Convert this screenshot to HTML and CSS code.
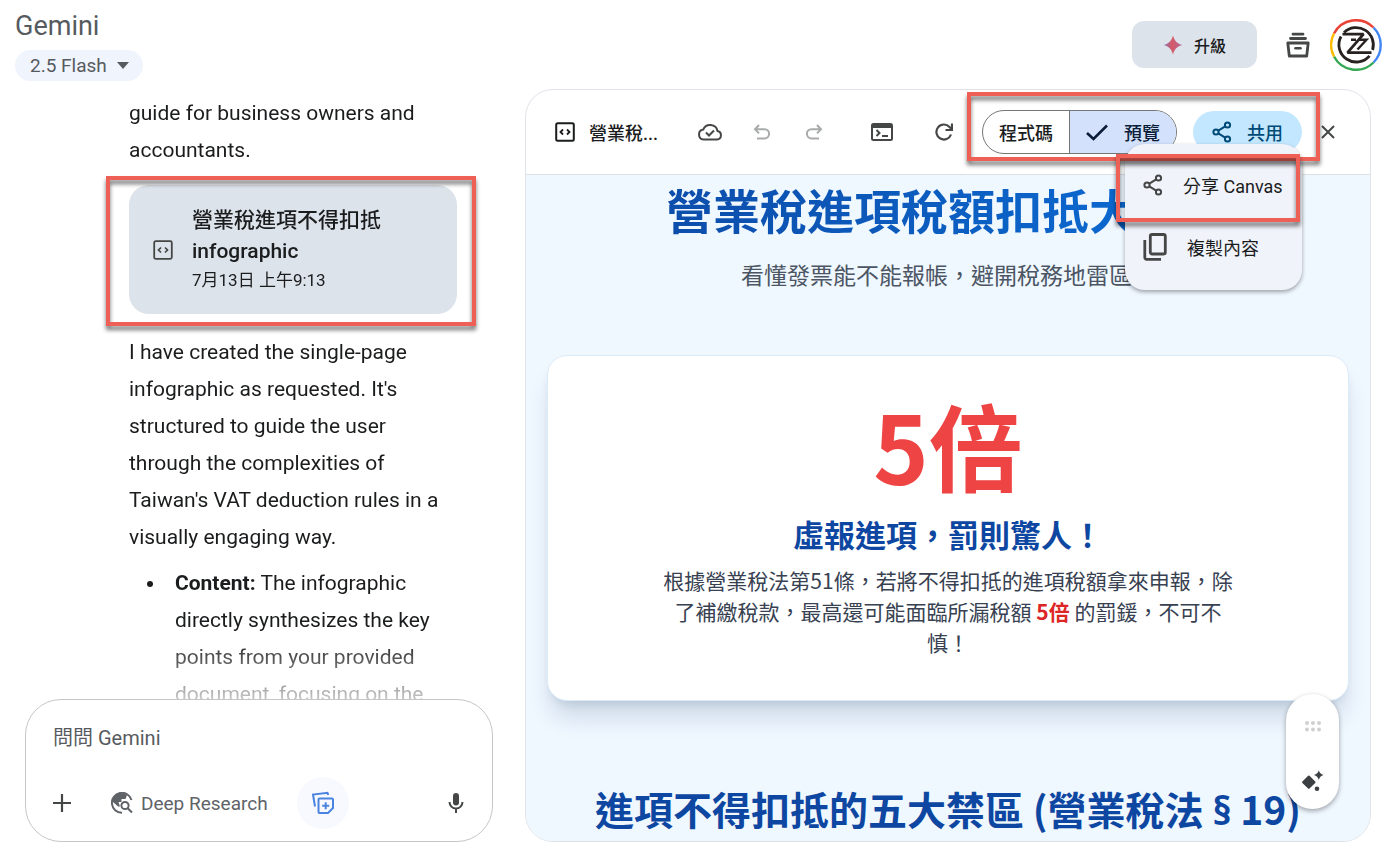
FILE: index.html
```html
<!DOCTYPE html>
<html lang="zh-Hant">
<head>
    <meta charset="UTF-8">
    <meta name="viewport" content="width=device-width, initial-scale=1.0">
    <title>Gemini</title>
    <link rel="stylesheet" href="styles.css">
</head>
<body>
    <header class="topbar">
        <div class="brand">
            <h1>Gemini</h1>
            <button class="model" type="button">2.5 Flash
                <svg width="12" height="7" viewBox="0 0 12 7"><path d="M0 0h12L6 7z" fill="currentColor"/></svg>
            </button>
        </div>
        <div class="account">
            <button class="upgrade" type="button">
                <svg width="20" height="20" viewBox="0 0 20 20">
                    <defs>
                        <linearGradient id="spark" x1="0" y1="0" x2="1" y2="0">
                            <stop offset="0" stop-color="#8a6fb0"/>
                            <stop offset=".45" stop-color="#d65a68"/>
                            <stop offset="1" stop-color="#b0689a"/>
                        </linearGradient>
                    </defs>
                    <path d="M10 .5C11.500 6 14 8.500 19.500 10C14 11.500 11.500 14 10 19.500C8.500 14 6 11.500 .5 10C6 8.500 8.500 6 10 .5z" fill="url(#spark)"/>
                </svg>
                升級
            </button>
            <button class="icon-btn stack" type="button" aria-label="封存">
                <svg width="24" height="26" viewBox="0 0 24 26" fill="none" stroke="#444746">
                    <path d="M7 2.200h10M4.500 6.500h15" stroke-width="2.800" stroke-linecap="round"/>
                    <path d="M1.800 11h20.400l-1.500 13H3.300z" stroke-width="2.800" stroke-linejoin="round"/>
                    <path d="M9.500 16.300h5" stroke-width="2.600" stroke-linecap="round"/>
                </svg>
            </button>
            <a class="avatar" href="#" aria-label="帳戶">
                <svg width="52" height="52" viewBox="0 0 52 52" fill="none">
                    <g stroke-width="2.400">
                        <path d="M4 14.500A24.800 24.800 0 0 1 43.500 8.500" stroke="#ea4335"/>
                        <path d="M43.500 8.500A24.800 24.800 0 0 1 43.500 43.500" stroke="#4285f4"/>
                        <path d="M43.500 43.500A24.800 24.800 0 0 1 4 37.500" stroke="#34a853"/>
                        <path d="M4 37.500A24.800 24.800 0 0 1 4 14.500" stroke="#fbbc04"/>
                    </g>
                    <g stroke="#27211f" stroke-width="2.800">
                        <path d="M14 13.500A17.300 17.300 0 0 1 42.600 31M39.500 36.800A17.300 17.300 0 0 1 11 17.500"/>
                        <path d="M12.500 15.200H33.500L17.500 33.600H41.500" stroke-linejoin="bevel"/>
                        <path d="M21 20.800h5M29 20.800h7.500L27.500 30.500" stroke-width="2.400"/>
                    </g>
                </svg>
            </a>
        </div>
    </header>

    <main class="workspace">
        <section class="chat">
            <div class="messages">
                <p>guide for business owners and accountants.</p>
                <div class="artifact-wrap">
                    <button class="artifact" type="button">
                        <svg width="20" height="20" viewBox="0 0 20 20" fill="none" stroke="#444746">
                            <rect x="1.200" y="1.200" width="17.600" height="17.600" rx="1.500" stroke-width="1.800"/>
                            <path d="M8 7.500L5.500 10L8 12.500M12 7.500L14.500 10L12 12.500" stroke-width="1.700"/>
                        </svg>
                        <span class="artifact-text">
                            <strong>營業稅進項不得扣抵 infographic</strong>
                            <span class="date">7月13日 上午9:13</span>
                        </span>
                    </button>
                    <div class="highlight highlight-artifact"></div>
                </div>
                <p>I have created the single-page infographic as requested. It's structured to guide the user through the complexities of Taiwan's VAT deduction rules in a visually engaging way.</p>
                <ul>
                    <li><b>Content:</b> The infographic directly synthesizes the key points from your provided document, focusing on the</li>
                </ul>
            </div>
            <form class="composer">
                <input type="text" placeholder="問問 Gemini" aria-label="問問 Gemini">
                <div class="tools">
                    <button class="icon-btn" type="button" aria-label="新增檔案">
                        <svg width="20" height="20" viewBox="0 0 20 20" stroke="#444746" stroke-width="2.200"><path d="M10 1v18M1 10h18"/></svg>
                    </button>
                    <button class="research" type="button">
                        <svg width="22" height="22" viewBox="0 0 22 22" fill="none" stroke="#5f6368" stroke-width="2">
                            <path d="M20.500 8A10 10 0 1 0 11 20.800"/>
                            <path d="M2 7C4 2 11 0 16 3l-1.500 4h-4v3H7.500L9 14.500H7L2 10z" fill="#5f6368" stroke="none"/>
                            <circle cx="14" cy="13.500" r="3.600"/>
                            <path d="M16.700 16.200L21 20.500"/>
                        </svg>
                        Deep Research
                    </button>
                    <button class="icon-btn canvas-toggle" type="button" aria-label="Canvas">
                        <svg width="24" height="24" viewBox="0 0 24 24" fill="none" stroke="#4a84e0" stroke-width="2">
                            <path d="M4 15.500L2 3.500L16.500 1.800L17.200 4"/>
                            <path d="M8.500 7.500h12.500a1 1 0 0 1 1 1V17l-5 5H8.500a1 1 0 0 1-1-1V8.500a1 1 0 0 1 1-1z" stroke-linejoin="round"/>
                            <path d="M14.700 11.200v7M11.200 14.700h7"/>
                        </svg>
                    </button>
                    <button class="icon-btn mic" type="button" aria-label="使用麥克風">
                        <svg width="16" height="20" viewBox="0 0 16 20" fill="none" stroke="#444746" stroke-width="2">
                            <rect x="5" y="0" width="6" height="12.500" rx="3" fill="#444746" stroke="none"/>
                            <path d="M1.500 9a6.500 6.500 0 0 0 13 0M8 15.500V20"/>
                        </svg>
                    </button>
                </div>
            </form>
        </section>

        <section class="canvas">
            <div class="canvas-bar">
                <svg class="code-icon" width="20" height="20" viewBox="0 0 20 20" fill="none" stroke="#1b1c1d">
                    <rect x="1.200" y="1.200" width="17.600" height="17.600" rx="1.500" stroke-width="2"/>
                    <path d="M8 7.500L5.500 10L8 12.500M12 7.500L14.500 10L12 12.500" stroke-width="1.800"/>
                </svg>
                <h2>營業稅...</h2>
                <div class="history">
                    <button class="icon-btn" type="button" aria-label="已儲存">
                        <svg width="26" height="18" viewBox="0 0 26 18" fill="none" stroke="#444746" stroke-width="2">
                            <path d="M6.500 16.500h13.500a4.300 4.300 0 0 0 .5-8.500A7.500 7.500 0 0 0 6.200 6.600A5 5 0 0 0 6.500 16.500z"/>
                            <path d="M9 9.500L12 12.500L17 7.500"/>
                        </svg>
                    </button>
                    <button class="icon-btn" type="button" aria-label="復原" disabled>
                        <svg width="18" height="16" viewBox="0 0 18 16" fill="none" stroke="#a8aaac" stroke-width="2"><path d="M6 1L2 5.200L6 9.400M2 5.200h9.500a4.600 4.600 0 0 1 0 9.200H4"/></svg>
                    </button>
                    <button class="icon-btn" type="button" aria-label="重做" disabled>
                        <svg width="18" height="16" viewBox="0 0 18 16" fill="none" stroke="#a8aaac" stroke-width="2"><path d="M12 1L16 5.200L12 9.400M16 5.200H6.500a4.600 4.600 0 0 0 0 9.200H14"/></svg>
                    </button>
                </div>
                <button class="icon-btn" type="button" aria-label="主控台">
                    <svg width="22" height="18" viewBox="0 0 22 18" fill="none" stroke="#444746" stroke-width="2">
                        <rect x="1" y="1" width="20" height="16" rx="1.500"/>
                        <path d="M1 3h20" stroke-width="4"/>
                        <path d="M5.500 7L8.500 10L5.500 13M11 13h6"/>
                    </svg>
                </button>
                <button class="icon-btn refresh" type="button" aria-label="重新整理">
                    <svg width="18" height="18" viewBox="0 0 18 18" fill="none" stroke="#444746" stroke-width="2.200">
                        <path d="M16 11.500A7.500 7.500 0 1 1 14.500 4L16.500 6"/>
                        <path d="M17 .5v6.500h-6.500"/>
                    </svg>
                </button>
                <div class="actions">
                    <div class="switch">
                        <button type="button">程式碼</button>
                        <button class="selected" type="button">
                            <svg width="22" height="17" viewBox="0 0 22 17" fill="none" stroke="#0b1d38" stroke-width="2.600"><path d="M1 9L7.500 15L21 1.500"/></svg>
                            預覽
                        </button>
                    </div>
                    <button class="share" type="button">
                        <svg width="20" height="22" viewBox="0 0 20 22" fill="none" stroke="currentColor" stroke-width="2">
                            <circle cx="15.500" cy="4" r="2.600"/><circle cx="4" cy="11" r="2.600"/><circle cx="15.500" cy="18" r="2.600"/>
                            <path d="M6.300 9.600L13.200 5.400M6.300 12.400L13.200 16.600"/>
                        </svg>
                        共用
                    </button>
                    <div class="menu">
                        <button class="menu-share" type="button">
                            <svg width="20" height="22" viewBox="0 0 20 22" fill="none" stroke="#444746" stroke-width="2">
                                <circle cx="15.500" cy="4" r="2.600"/><circle cx="4" cy="11" r="2.600"/><circle cx="15.500" cy="18" r="2.600"/>
                                <path d="M6.300 9.600L13.200 5.400M6.300 12.400L13.200 16.600"/>
                            </svg>
                            分享 Canvas
                        </button>
                        <button type="button">
                            <svg width="24" height="28" viewBox="0 0 24 28" fill="none" stroke="#444746" stroke-width="2.800">
                                <rect x="7.300" y="1.500" width="15" height="19.500" rx="1.800"/>
                                <path d="M1.800 7v17.500a1.800 1.800 0 0 0 1.800 1.800H18"/>
                            </svg>
                            複製內容
                        </button>
                    </div>
                    <div class="highlight highlight-actions"></div>
                    <div class="highlight highlight-menu"></div>
                </div>
                <button class="icon-btn close" type="button" aria-label="關閉">
                    <svg width="14" height="14" viewBox="0 0 14 14" stroke="#444746" stroke-width="2"><path d="M1 1l12 12M13 1L1 13"/></svg>
                </button>
            </div>

            <article class="preview">
                <h2 class="title">營業稅進項稅額扣抵大解密</h2>
                <p class="subtitle">看懂發票能不能報帳，避開稅務地雷區！</p>
                <div class="card">
                    <div class="figure">5倍</div>
                    <h3>虛報進項，罰則驚人！</h3>
                    <p>根據營業稅法第51條，若將不得扣抵的進項稅額拿來申報，除了補繳稅款，最高還可能面臨所漏稅額 <b>5倍</b> 的罰鍰，不可不慎！</p>
                </div>
                <h2 class="section-title">進項不得扣抵的五大禁區 (營業稅法 <span class="latin">§</span> 19)</h2>
            </article>

            <div class="floating">
                <svg width="18" height="12" viewBox="0 0 18 12" fill="#d0d0d0">
                    <circle cx="3" cy="3" r="2"/><circle cx="9" cy="3" r="2"/><circle cx="15" cy="3" r="2"/>
                    <circle cx="3" cy="9.500" r="2"/><circle cx="9" cy="9.500" r="2"/><circle cx="15" cy="9.500" r="2"/>
                </svg>
                <button class="icon-btn" type="button" aria-label="編輯建議">
                    <svg width="22" height="22" viewBox="0 0 22 22" fill="#3c4043">
                        <path d="M7.500 5.800L13.200 11.500a1 1 0 0 1 0 1.400L7.500 18.600a1 1 0 0 1-1.400 0L.4 12.900a1 1 0 0 1 0-1.400L6.100 5.800a1 1 0 0 1 1.400 0z"/>
                        <path d="M16.800 .3Q17.700 4 21.500 5.100Q17.700 6.200 16.800 10Q15.800 6.200 12 5.100Q15.800 4 16.800 .3z"/>
                        <circle cx="15" cy="18.800" r="2.300"/>
                    </svg>
                </button>
            </div>
        </section>
    </main>
</body>
</html>
```

FILE: styles.css
```css
* {
    box-sizing: border-box;
}
body {
    margin: 0;
    height: 100vh;
    display: flex;
    flex-direction: column;
    background-color: #fff;
    color: #1b1c1d;
    font-family: Roboto, "Noto Sans CJK TC", sans-serif;
    overflow: hidden;
}
h1, h2, h3, p, ul {
    margin: 0;
}
button {
    border: none;
    padding: 0;
    background: none;
    color: inherit;
    font: inherit;
    cursor: pointer;
}
svg {
    display: block;
    flex: none;
}
.icon-btn {
    width: 36px;
    height: 36px;
    display: flex;
    align-items: center;
    justify-content: center;
    flex: none;
}

/* top bar */
.topbar {
    display: flex;
    justify-content: space-between;
    align-items: center;
    padding: 0 18px 0 15px;
    height: 89px;
    flex: none;
}
.brand h1 {
    font-size: 27px;
    line-height: 36px;
    font-weight: 400;
    color: #575b5f;
}
.model {
    display: flex;
    align-items: center;
    gap: 10px;
    margin-top: 6px;
    padding: 0 14px 0 15px;
    height: 31px;
    border-radius: 16px;
    background-color: #f0f4fc;
    color: #575b5f;
    font-size: 19px;
}
.account {
    display: flex;
    align-items: center;
}
.upgrade {
    display: flex;
    align-items: center;
    justify-content: center;
    gap: 11px;
    width: 125px;
    height: 47px;
    border-radius: 12px;
    background-color: #dde3ea;
    font-size: 16px;
    font-weight: 500;
}
.stack {
    margin: 0 14px 0 23px;
}

/* two panes */
.workspace {
    flex: 1;
    min-height: 0;
    display: grid;
    grid-template-columns: 3fr 5fr;
    padding-bottom: 12px;
}
.chat {
    display: flex;
    flex-direction: column;
    min-width: 0;
    min-height: 0;
    padding: 0 32px 0 25px;
}
.messages {
    flex: 1;
    min-height: 0;
    overflow: hidden;
    padding: 6px 36px 0 104px;
    font-size: 21px;
    line-height: 37px;
    -webkit-mask-image: linear-gradient(#000 90%, rgba(0, 0, 0, 0.25));
    mask-image: linear-gradient(#000 90%, rgba(0, 0, 0, 0.25));
}
.artifact-wrap {
    position: relative;
    margin: 16px 0 20px;
}
.artifact {
    display: flex;
    align-items: center;
    gap: 19px;
    width: 100%;
    padding: 20px 24px;
    border-radius: 20px;
    background-color: #dde3ea;
    text-align: left;
}
.artifact strong, .date {
    display: block;
    line-height: 31px;
    font-weight: 500;
}
.artifact .date {
    font-size: 17px;
    line-height: 27px;
    font-weight: 400;
}
.messages ul {
    margin-top: 9px;
    padding-left: 37px;
}
.messages li {
    padding-left: 9px;
}

.composer {
    height: 143px;
    flex: none;
    display: flex;
    flex-direction: column;
    justify-content: space-between;
    padding: 20px 18px 12px;
    border: 1px solid #c4c7c5;
    border-radius: 36px;
}
.composer input {
    border: none;
    outline: none;
    padding: 0 9px;
    height: 36px;
    width: 100%;
    font: inherit;
    font-size: 20px;
    background: none;
}
.composer input::placeholder {
    color: #575b5f;
    opacity: 1;
}
.tools {
    display: flex;
    align-items: center;
}
.research {
    display: flex;
    align-items: center;
    gap: 8px;
    margin-left: 31px;
    color: #5f6368;
    font-size: 19px;
}
.canvas-toggle {
    width: 52px;
    height: 52px;
    margin-left: 29px;
    border-radius: 50%;
    background-color: #f8f9fe;
}
.mic {
    margin-left: auto;
}

/* canvas pane */
.canvas {
    position: relative;
    display: flex;
    flex-direction: column;
    min-width: 0;
    min-height: 0;
    margin-right: 29px;
    border: 1px solid #dfe3e8;
    border-radius: 28px;
}
.canvas-bar {
    display: flex;
    align-items: center;
    height: 85px;
    flex: none;
    padding: 0 24px 0 29px;
    border-bottom: 1px solid #dde1e6;
}
.canvas-bar h2 {
    margin: 0 34px 0 14px;
    font-size: 18px;
    font-weight: 500;
}
.history {
    display: flex;
    gap: 16px;
    margin-right: 32px;
}
.refresh {
    margin-left: 26px;
}
.actions {
    position: relative;
    display: flex;
    align-items: center;
    gap: 16px;
    margin: 0 8px 0 auto;
    font-size: 18px;
    font-weight: 500;
}
.switch {
    display: flex;
    height: 44px;
    border: 1px solid #747775;
    border-radius: 22px;
    overflow: hidden;
}
.switch button {
    display: flex;
    align-items: center;
    gap: 16px;
    padding: 0 16px;
}
.switch .selected {
    border-left: 1px solid #747775;
    background-color: #d3e1fd;
    color: #0b1d38;
}
.share {
    display: flex;
    align-items: center;
    justify-content: center;
    gap: 15px;
    width: 109px;
    height: 42px;
    border-radius: 21px;
    background-color: #c2e7ff;
    color: #004a77;
}
.menu {
    position: absolute;
    top: 34px;
    right: 0;
    z-index: 2;
    width: 177px;
    padding: 17px 0 19px;
    border-radius: 20px;
    background-color: #f0f3fa;
    box-shadow: 0 2px 4px rgba(0, 0, 0, 0.35);
    font-weight: 400;
}
.menu button {
    display: flex;
    align-items: center;
    gap: 20px;
    height: 48px;
    padding-left: 18px;
    white-space: nowrap;
}
.menu .menu-share {
    margin-bottom: 14px;
}

/* red markers */
.highlight {
    position: absolute;
    z-index: 3;
    border: 4px solid #ee6055;
    filter: drop-shadow(0 4px 2px rgba(0, 0, 0, 0.55));
    pointer-events: none;
}
.highlight-artifact {
    inset: -9px -19px -12px -23px;
}
.highlight-actions {
    inset: -18px -18px -7px -15px;
}
.highlight-menu {
    top: 44px;
    right: 2px;
    width: 184px;
    height: 68px;
}

/* infographic */
.preview {
    flex: 1;
    min-height: 0;
    overflow: hidden;
    padding: 4px 21px 0;
    border-radius: 0 0 27px 27px;
    background-color: #eff7ff;
    font-family: "Noto Sans CJK TC", sans-serif;
    text-align: center;
}
.title {
    background: linear-gradient(90deg, #0d47a1, #0b74e0);
    -webkit-background-clip: text;
    background-clip: text;
    color: transparent;
    font-size: 47px;
    line-height: 60px;
}
.subtitle {
    margin-top: 17px;
    color: #4b5563;
    font-size: 23px;
    line-height: 36px;
}
.card {
    margin-top: 63px;
    padding: 41px 24px 42px;
    border: 1px solid #dcebf8;
    border-radius: 20px;
    background-color: #fff;
    box-shadow: 0 20px 24px -6px rgba(30, 60, 100, 0.18), 0 6px 10px -4px rgba(30, 60, 100, 0.12);
}
.figure {
    color: #ef4444;
    font-size: 94px;
    line-height: 94px;
    font-weight: 700;
}
.card h3 {
    margin-top: 23px;
    color: #0d47a1;
    font-size: 31px;
    line-height: 40px;
}
.card p {
    max-width: 576px;
    margin: 11px auto 0;
    color: #374151;
    font-size: 21px;
    line-height: 31px;
}
.card b {
    color: #dc2626;
}
.section-title {
    margin-top: 83px;
    color: #0d47a1;
    font-size: 39px;
    line-height: 48px;
    white-space: nowrap;
}
.latin {
    font-family: "Noto Sans", sans-serif;
}

.floating {
    position: absolute;
    right: 31px;
    bottom: 32px;
    width: 53px;
    height: 115px;
    padding: 26px 0 10px;
    display: flex;
    flex-direction: column;
    align-items: center;
    justify-content: space-between;
    border-radius: 27px;
    background-color: #fff;
    box-shadow: 0 2px 5px rgba(0, 0, 0, 0.35);
}
```
